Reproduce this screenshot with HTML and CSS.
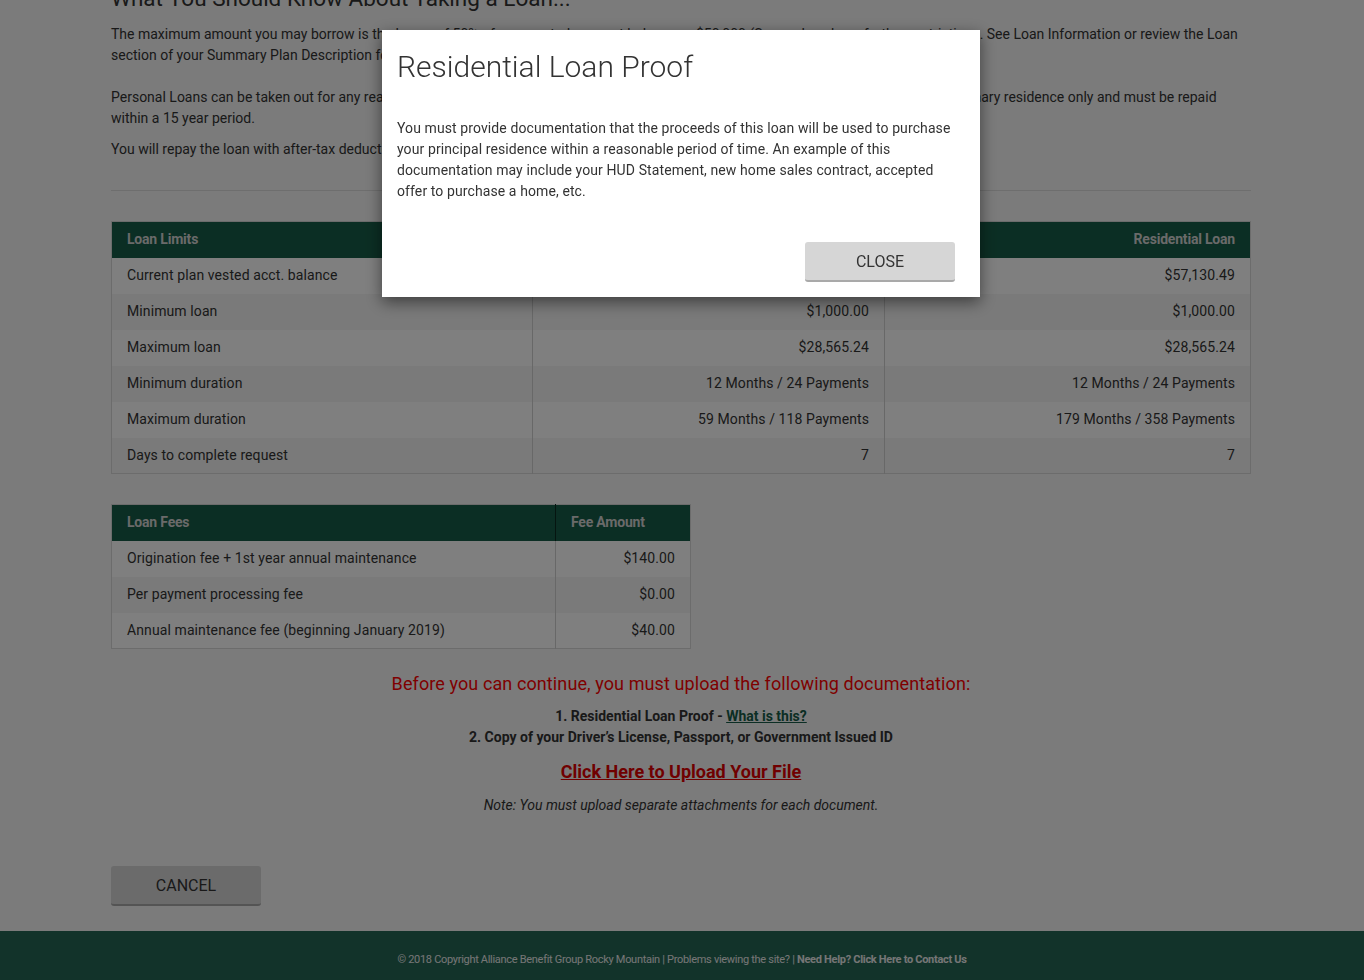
FILE: index.html
```html
<!DOCTYPE html>
<html lang="en">
<head>
<meta charset="utf-8">
<title>Residential Loan Proof</title>
<link rel="stylesheet" href="styles.css">
</head>
<body>
<div class="page">
  <main class="container">
    <h2 class="section-title">What You Should Know About Taking a Loan...</h2>
    <p class="intro intro-first">The maximum amount you may borrow is the lesser of 50% of your vested account balance or $50,000 (Some plans have further restrictions. See Loan Information or review the Loan section of your Summary Plan Description for details.</p>
    <p class="intro">Personal Loans can be taken out for any reason and must be repaid within 5 years. Residential Loans are intended for the purchase of a primary residence only and must be repaid within a 15 year period.</p>
    <p class="intro">You will repay the loan with after-tax deductions from your paycheck.</p>
    <hr class="divider">

    <table class="data-table limits">
      <thead>
        <tr><th class="left">Loan Limits</th><th class="right">Personal Loan</th><th class="right">Residential Loan</th></tr>
      </thead>
      <tbody>
        <tr><td>Current plan vested acct. balance</td><td class="right">$57,130.49</td><td class="right">$57,130.49</td></tr>
        <tr><td>Minimum loan</td><td class="right">$1,000.00</td><td class="right">$1,000.00</td></tr>
        <tr><td>Maximum loan</td><td class="right">$28,565.24</td><td class="right">$28,565.24</td></tr>
        <tr><td>Minimum duration</td><td class="right">12 Months / 24 Payments</td><td class="right">12 Months / 24 Payments</td></tr>
        <tr><td>Maximum duration</td><td class="right">59 Months / 118 Payments</td><td class="right">179 Months / 358 Payments</td></tr>
        <tr><td>Days to complete request</td><td class="right">7</td><td class="right">7</td></tr>
      </tbody>
    </table>

    <table class="data-table fees">
      <thead>
        <tr><th class="left">Loan Fees</th><th class="left">Fee Amount</th></tr>
      </thead>
      <tbody>
        <tr><td>Origination fee + 1st year annual maintenance</td><td class="right">$140.00</td></tr>
        <tr><td>Per payment processing fee</td><td class="right">$0.00</td></tr>
        <tr><td>Annual maintenance fee (beginning January 2019)</td><td class="right">$40.00</td></tr>
      </tbody>
    </table>

    <section class="upload">
      <h3 class="upload-title">Before you can continue, you must upload the following documentation:</h3>
      <p class="doc-item">1. Residential Loan Proof - <a href="#" class="green-link">What is this?</a></p>
      <p class="doc-item">2. Copy of your Driver’s License, Passport, or Government Issued ID</p>
      <a href="#" class="upload-link">Click Here to Upload Your File</a>
      <p class="note">Note: You must upload separate attachments for each document.</p>
    </section>

    <div class="actions">
      <button class="btn">CANCEL</button>
    </div>
  </main>

  <footer class="site-footer">
    © 2018 Copyright Alliance Benefit Group Rocky Mountain | Problems viewing the site? | <strong>Need Help? Click Here to Contact Us</strong>
  </footer>
</div>

<div class="backdrop"></div>

<div class="modal">
  <div class="modal-header">
    <h4 class="modal-title">Residential Loan Proof</h4>
  </div>
  <div class="modal-body">
    You must provide documentation that the proceeds of this loan will be used to purchase your principal residence within a reasonable period of time. An example of this documentation may include your HUD Statement, new home sales contract, accepted offer to purchase a home, etc.
  </div>
  <div class="modal-footer">
    <button class="btn">CLOSE</button>
  </div>
</div>
</body>
</html>
```

FILE: styles.css
```css
* { box-sizing: border-box; }

html, body {
  margin: 0;
  padding: 0;
}

body {
  font-family: Roboto, "Liberation Sans", Arial, sans-serif;
  font-size: 14px;
  line-height: 21px;
  color: #333;
  background: #f6f6f6;
  overflow: hidden;
}

.container {
  width: 1140px;
  margin: 0 auto;
  position: relative;
  left: -1px;
}

.section-title {
  font-size: 22.5px;
  font-weight: 400;
  line-height: 26px;
  margin: -15px 0 13px;
  color: #333;
}

.intro {
  margin: 0 0 10px;
}

.intro-first {
  margin-bottom: 21px;
}

.divider {
  border: 0;
  border-top: 1px solid #ddd;
  margin: 30px 0 30px;
}

.data-table {
  border-collapse: collapse;
  border: 1px solid #d8d8d8;
  margin-bottom: 30px;
  letter-spacing: 0.1px;
}

.data-table th {
  background: #175d48;
  color: #d4d4d4;
  font-weight: 700;
  font-size: 14px;
  height: 36px;
  padding: 0 15px;
  letter-spacing: -0.2px;
}

.data-table td {
  height: 36px;
  padding: 0 15px;
  border-left: 1px solid #d0d0d0;
}

.data-table td:first-child { border-left: 0; }

.data-table tbody tr:nth-child(odd) td { background: #ffffff; }
.data-table tbody tr:nth-child(even) td { background: #f4f4f4; }

.left { text-align: left; }
.right { text-align: right; }

.limits { width: 1140px; }
.limits th:first-child, .limits td:first-child { width: 421px; }
.limits th:nth-child(2), .limits td:nth-child(2) { width: 352px; }

.fees {
  width: 580px;
  margin-bottom: 22px;
}
.fees th:first-child, .fees td:first-child { width: 444px; }
.fees th + th { border-left: 1px solid #0b2a20; }

.upload {
  text-align: center;
  padding-top: 1px;
}

.upload-title {
  color: #ff0000;
  font-size: 18px;
  font-weight: 400;
  line-height: 24px;
  margin: 0 0 10px;
  letter-spacing: 0.1px;
}

.doc-item {
  margin: 0;
  font-weight: 700;
  color: #333;
}

.green-link {
  color: #165c48;
  text-decoration: underline;
}

.upload-link {
  display: inline-block;
  color: #e00000;
  font-weight: 700;
  font-size: 18px;
  line-height: 24px;
  margin-top: 12px;
  text-decoration: underline;
}

.note {
  font-style: italic;
  margin: 11px 0 0;
}

.actions {
  margin-top: 50px;
}

.btn {
  width: 150px;
  height: 40px;
  background: #d6d6d6;
  border: 0;
  border-bottom: 2px solid #a9a9a9;
  border-radius: 3px;
  font-family: Roboto, "Liberation Sans", Arial, sans-serif;
  font-size: 16px;
  color: #333;
  padding: 0;
  cursor: pointer;
}

.site-footer {
  height: 49px;
  background: #246655;
  color: #ececec;
  font-size: 11px;
  letter-spacing: -0.3px;
  text-align: center;
  line-height: 13px;
  padding-top: 22px;
  margin-top: 25px;
}

.site-footer strong { font-weight: 700; }

.backdrop {
  position: fixed;
  inset: 0;
  background: rgba(0, 0, 0, 0.5);
}

.modal {
  position: fixed;
  top: 30px;
  left: 382px;
  width: 598px;
  background: #fff;
  box-shadow: 0 5px 15px rgba(0, 0, 0, 0.5);
}

.modal-header {
  padding: 20px 15px 10px;
}

.modal-title {
  margin: 0;
  font-size: 30px;
  font-weight: 300;
  line-height: 33px;
  color: #333;
}

.modal-body {
  padding: 25px 25px 20px 15px;
  letter-spacing: 0.1px;
}

.modal-footer {
  display: flex;
  justify-content: flex-end;
  padding: 20px 25px 15px 15px;
}
```
